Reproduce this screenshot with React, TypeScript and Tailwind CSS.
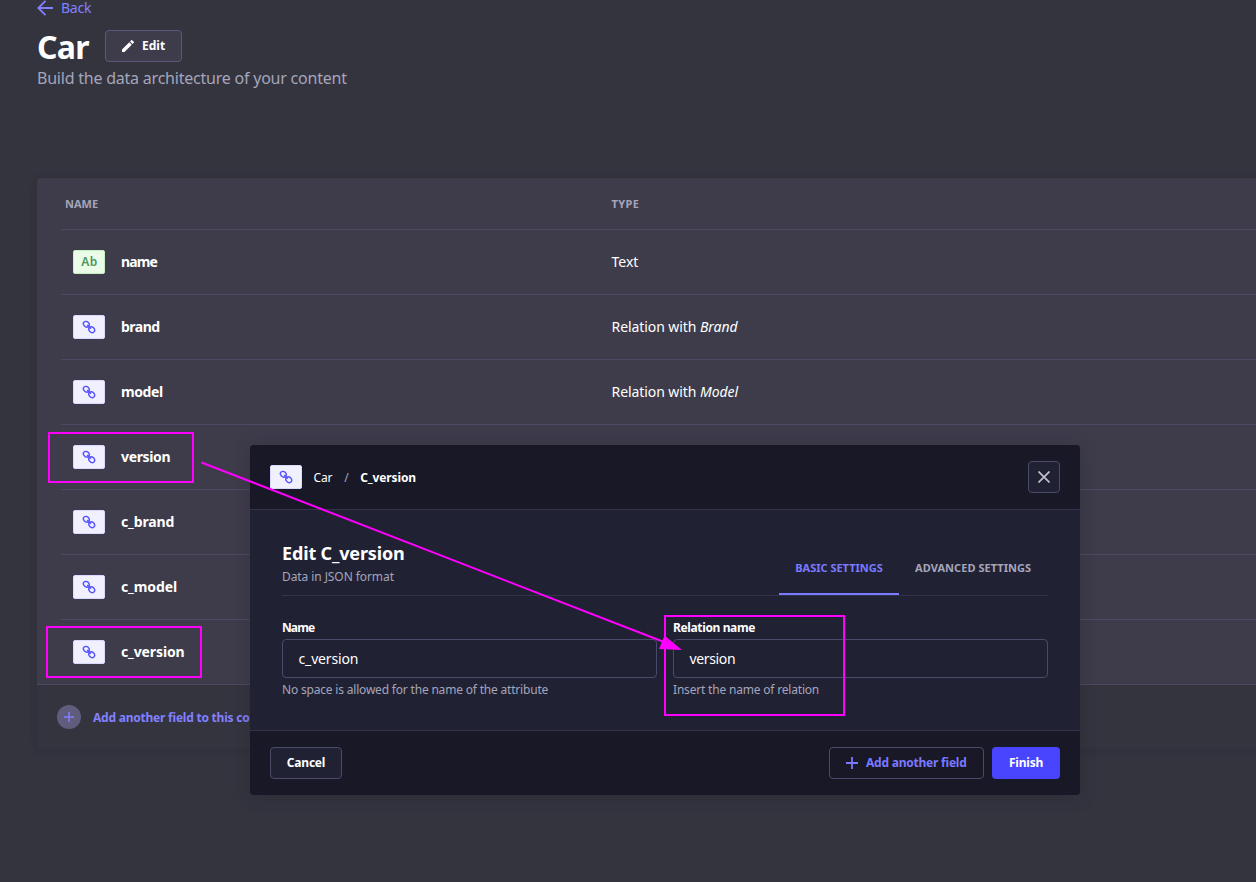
const LinkBadge = () => (
  <span className="flex h-6 w-8 shrink-0 items-center justify-center rounded-[2px] border border-[#d9d8ff] bg-[#f0f0ff]">
    <svg width="14" height="14" viewBox="0 0 14 14" fill="none" stroke="#5552ff">
      <ellipse cx="4.300" cy="4.200" rx="3.100" ry="2.600" strokeWidth="1.400" transform="rotate(45 4.300 4.200)" />
      <ellipse cx="9.700" cy="9.700" rx="3.100" ry="2.600" strokeWidth="1.400" transform="rotate(45 9.700 9.700)" />
      <path d="M5.200 5.100l3.600 3.600" strokeWidth="1.600" />
    </svg>
  </span>
);

const TextBadge = () => (
  <span className="flex h-6 w-8 shrink-0 items-center justify-center rounded-[2px] border border-[#c6f0c2] bg-[#eafbe7] pl-px text-[12px] font-semibold tracking-[0.5px] text-[#4b935b]">
    Ab
  </span>
);

interface Field {
  name: string;
  nameClass: string;
  kind: "text" | "relation";
  target?: string;
}

const fields: Field[] = [
  { name: "name", nameClass: "tracking-[-0.85px]", kind: "text" },
  { name: "brand", nameClass: "tracking-[-0.5px]", kind: "relation", target: "Brand" },
  { name: "model", nameClass: "tracking-[-0.4px]", kind: "relation", target: "Model" },
  { name: "version", nameClass: "tracking-[-0.35px]", kind: "relation" },
  { name: "c_brand", nameClass: "tracking-[-0.15px]", kind: "relation" },
  { name: "c_model", nameClass: "tracking-[-0.1px]", kind: "relation" },
  { name: "c_version", nameClass: "tracking-[-0.12px]", kind: "relation" },
];

const FieldRow = ({ field }: { field: Field }) => (
  <div className="flex h-[65px] items-center border-t border-[#4c4a62] pl-3 text-[14px] text-white">
    <div className="flex w-[538.500px] items-center gap-4">
      {field.kind === "relation" ? <LinkBadge /> : <TextBadge />}
      <span className={`pb-0.5 font-bold ${field.nameClass}`}>{field.name}</span>
    </div>
    {field.kind === "text" && <p className="pb-0.5">Text</p>}
    {field.target && (
      <p className="pb-0.5 tracking-[-0.07px]">
        Relation with <em>{field.target}</em>
      </p>
    )}
  </div>
);

interface TextFieldProps {
  label: string;
  labelClass: string;
  value: string;
  valueClass: string;
  hint: string;
}

const TextField = ({ label, labelClass, value, valueClass, hint }: TextFieldProps) => (
  <div className="flex-1">
    <p className={`text-[12px] leading-4 font-bold text-white ${labelClass}`}>{label}</p>
    <div
      className={`mt-[3px] flex h-[39px] items-center rounded-[4px] border border-[#4a4a6a] bg-[#212134] px-[15.500px] text-[14px] text-white ${valueClass}`}
    >
      {value}
    </div>
    <p className="mt-1 text-[12px] leading-4 tracking-[-0.19px] text-[#a5a5ba]">{hint}</p>
  </div>
);

interface PlusIconProps {
  size: number;
  color: string;
}

const PlusIcon = ({ size, color }: PlusIconProps) => (
  <svg width={size} height={size} viewBox="0 0 12 12" stroke={color} strokeWidth="1.8">
    <path d="M6 0v12M0 6h12" />
  </svg>
);

const EditFieldModal = () => (
  <div className="absolute top-[445px] left-[250px] flex h-[350px] w-[830px] flex-col overflow-hidden rounded-[4px] bg-[#212134] shadow-[0_2px_15px_rgba(33,33,52,0.35)]">
    {/* Header */}
    <div className="flex h-[65px] items-center justify-between border-b border-[#32324d] bg-[#181826] px-5">
      <div className="flex items-center text-[12px] text-white">
        <LinkBadge />
        <span className="ml-[11.500px] pt-0.5 tracking-[-0.2px]">Car</span>
        <span className="ml-3 pt-0.5 text-[#a5a5ba]">/</span>
        <span className="ml-[11.500px] pt-0.5 font-bold tracking-[-0.12px]">C_version</span>
      </div>
      <button className="flex size-8 items-center justify-center rounded-[4px] border border-[#4a4a6a] bg-[#212134]">
        <svg width="12" height="12" viewBox="0 0 12 12" stroke="#c0c0cf" strokeWidth="1.7">
          <path d="M.5.5l11 11M11.5.5l-11 11" />
        </svg>
      </button>
    </div>

    {/* Body */}
    <div className="flex-1 px-8 pt-8">
      <div className="flex h-[54px] justify-between border-b border-[#32324d]">
        <div>
          <h2 className="text-[18px] leading-[22px] font-bold tracking-[-0.15px] text-white">
            Edit C_version
          </h2>
          <p className="mt-[5px] text-[12px] leading-4 tracking-[-0.08px] text-[#a5a5ba]">
            Data in JSON format
          </p>
        </div>
        <div className="flex text-[11px] leading-4 font-bold uppercase">
          <div className="w-[120px] border-b-2 border-[#7b79ff] pt-[18px] text-center whitespace-nowrap text-[#7b79ff]">
            Basic settings
          </div>
          <div className="w-[149px] pt-[18px] pl-4 tracking-[0.05px] whitespace-nowrap text-[#a5a5ba]">
            Advanced settings
          </div>
        </div>
      </div>

      <div className="mt-6 flex gap-4">
        <TextField
          label="Name"
          labelClass="tracking-[-0.9px]"
          value="c_version"
          valueClass="tracking-[-0.15px]"
          hint="No space is allowed for the name of the attribute"
        />
        <TextField
          label="Relation name"
          labelClass="tracking-[-0.37px]"
          value="version"
          valueClass="tracking-[-0.35px]"
          hint="Insert the name of relation"
        />
      </div>
    </div>

    {/* Footer */}
    <div className="flex h-[65px] items-center justify-between border-t border-[#32324d] bg-[#181826] px-5 text-[12px] font-bold tracking-[-0.22px]">
      <button className="h-8 w-[72px] rounded-[4px] border border-[#4a4a6a] bg-[#212134] text-white">
        Cancel
      </button>
      <div className="flex gap-2">
        <button className="flex h-8 w-[155px] items-center gap-2 rounded-[4px] border border-[#4a4a6a] pl-4 whitespace-nowrap text-[#7b79ff]">
          <PlusIcon size={12} color="#7b79ff" />
          Add another field
        </button>
        <button className="h-8 w-[68px] rounded-[4px] bg-[#4945ff] text-white">
          Finish
        </button>
      </div>
    </div>
  </div>
);

// Boxes and arrow that point out the related fields
const Annotations = () => (
  <svg
    className="pointer-events-none absolute inset-0"
    width="1256"
    height="882"
    fill="none"
    stroke="#ff00ff"
    strokeWidth="2"
  >
    <rect x="49" y="433" width="144" height="49" />
    <rect x="47" y="627" width="154" height="50" />
    <rect x="665" y="616" width="179" height="99" />
    <path d="M201.500 462.500L664 642" />
    <path d="M664.500 635.500L682 650L659 649z" fill="#ff00ff" stroke="none" />
  </svg>
);

const App = () => {
  return (
    <div className="relative h-[882px] w-[1256px] overflow-hidden bg-[#34343f] font-['Noto_Sans',sans-serif]">
      <div className="pl-[37px]">
        <div className="flex h-4 items-center gap-2 text-[14px] leading-4 tracking-[-0.25px] text-[#8280ff]">
          <svg width="16" height="16" viewBox="0 0 16 16" fill="none" stroke="#8280ff" strokeWidth="1.8">
            <path d="M16 8H1.500M8.500 .8L1.300 8l7.200 7.200" />
          </svg>
          <span>Back</span>
        </div>
        <div className="mt-[14px] flex h-8 items-center gap-4">
          <h1 className="w-[52px] pt-0.5 text-[32px] leading-8 font-bold tracking-[-0.7px] text-white">
            Car
          </h1>
          <button className="flex h-8 w-[77px] items-center gap-2 rounded-[4px] border border-[#5b5977] bg-[#3e3c4b] pl-4 text-[12px] font-bold text-white">
            <svg width="12" height="12" viewBox="0 0 12 12" fill="#fff">
              <path d="M0 9.500V12h2.500l7.300-7.300-2.500-2.500zM11.800 2.700a.66.660 0 0 0 0-.94L10.240.2a.66.660 0 0 0-.94 0L8 1.500 10.500 4z" />
            </svg>
            Edit
          </button>
        </div>
        <p className="mt-1 text-[16px] leading-6 tracking-[-0.22px] text-[#a5a5ba]">
          Build the data architecture of your content
        </p>

        {/* Fields table */}
        <div className="mt-[88px] h-[571px] w-[1300px] rounded-[4px] shadow-[0_1px_8px_rgba(26,26,38,0.2)]">
          <div className="rounded-t-[4px] border-b border-[#4c4a62] bg-[#3e3c4b] pl-6">
            <div className="flex h-[51px] items-center pt-px pl-1 text-[11px] font-bold text-[#a5a5ba]">
              <span className="w-[546.500px]">NAME</span>
              <span className="tracking-[0.4px]">TYPE</span>
            </div>
            {fields.map((field) => (
              <FieldRow key={field.name} field={field} />
            ))}
          </div>
          <div className="flex h-16 items-center gap-3 pl-5 text-[12px] font-bold tracking-[-0.22px] text-[#8280ff]">
            <span className="flex size-6 items-center justify-center rounded-full bg-[#5f5d7b]">
              <PlusIcon size={10} color="#8280ff" />
            </span>
            <span className="pt-0.5">Add another field to this collection type</span>
          </div>
        </div>
      </div>

      <EditFieldModal />
      <Annotations />
    </div>
  );
};

export default App;
